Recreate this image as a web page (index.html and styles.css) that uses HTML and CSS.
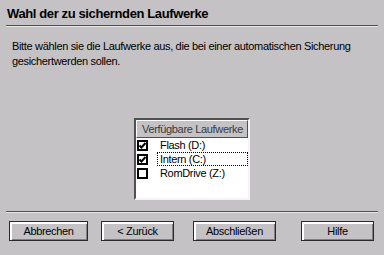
FILE: index.html
```html
<!DOCTYPE html>
<html>
<head>
<meta charset="utf-8">
<link rel="stylesheet" href="styles.css">
</head>
<body>
<div class="dialog">
  <h1 class="title">Wahl der zu sichernden Laufwerke</h1>
  <div class="sep"></div>
  <p class="intro">Bitte wählen sie die Laufwerke aus, die bei einer automatischen Sicherung<br>gesichertwerden sollen.</p>
  <div class="listwrap">
    <div class="listbox">
      <div class="listhead">Verfügbare Laufwerke</div>
      <div class="row">
        <span class="check"><svg width="7" height="7" viewBox="0 0 7 7"><path d="M0.5 3.5 L2.5 5.5 L6.5 1" fill="none" stroke="#000" stroke-width="2"/></svg></span>
        <span class="label">Flash (D:)</span>
      </div>
      <div class="row">
        <span class="check"><svg width="7" height="7" viewBox="0 0 7 7"><path d="M0.5 3.5 L2.5 5.5 L6.5 1" fill="none" stroke="#000" stroke-width="2"/></svg></span>
        <span class="label focus">Intern (C:)</span>
      </div>
      <div class="row">
        <span class="check"></span>
        <span class="label">RomDrive (Z:)</span>
      </div>
    </div>
  </div>
  <div class="sep"></div>
  <div class="buttons">
    <button class="btn btn-cancel">Abbrechen</button>
    <button class="btn btn-back">&lt; Zurück</button>
    <button class="btn btn-finish">Abschließen</button>
    <button class="btn btn-help">Hilfe</button>
  </div>
</div>
</body>
</html>
```
FILE: styles.css
```css
html, body {
  margin: 0;
  padding: 0;
  background: #c4c2c4;
}
.dialog {
  width: 384px;
  height: 255px;
  box-sizing: border-box;
  padding: 6px 6px 0 6px;
  font-family: "Liberation Sans", Arial, sans-serif;
  font-size: 11px;
  letter-spacing: -0.33px;
  color: #000;
  display: flex;
  flex-direction: column;
}
.title {
  margin: 0 0 3px 1px;
  font-size: 13px;
  font-weight: bold;
  letter-spacing: -0.38px;
  line-height: 16px;
  height: 16px;
  white-space: nowrap;
}
.sep {
  height: 1px;
  background: #505050;
  border-bottom: 1px solid #e8e8e8;
}
.intro {
  margin: 12px 0 0 6px;
  line-height: 15px;
  white-space: nowrap;
}
.listwrap {
  margin-top: 49px;
  display: flex;
  justify-content: center;
  margin-bottom: 11px;
}
.listbox {
  width: 116px;
  height: 82px;
  box-sizing: border-box;
  border: 2px solid;
  border-color: #505050 #f4f4f4 #f4f4f4 #505050;
  background: #fff;
}
.listhead {
  height: 18px;
  box-sizing: border-box;
  background: #c4c2c4;
  border: 1px solid;
  border-color: #fff #505050 #505050 #fff;
  color: #3a3a3a;
  line-height: 16px;
  padding-left: 5px;
  white-space: nowrap;
}
.row {
  height: 14px;
  display: flex;
  align-items: center;
}
.check {
  width: 11px;
  height: 11px;
  box-sizing: border-box;
  border: 2px solid #000;
  margin-left: 1px;
  display: flex;
  align-items: center;
  justify-content: center;
  background: #fff;
}
.check svg {
  display: block;
}
.label {
  margin-left: 9px;
  padding-left: 2px;
  height: 14px;
  line-height: 12px;
  flex: 1;
  box-sizing: border-box;
  border: 1px solid transparent;
  white-space: nowrap;
}
.focus {
  border: 1px dotted #000;
}
.buttons {
  display: flex;
  margin-top: 8px;
  padding-left: 3px;
}
.btn {
  height: 20px;
  box-sizing: border-box;
  border: 1px solid #2a2a2a;
  background: #c4c2c4;
  box-shadow: inset 2px 2px 0 #fff, inset -1px -1px 0 #808080;
  font-family: "Liberation Sans", Arial, sans-serif;
  font-size: 11px;
  letter-spacing: -0.33px;
  color: #000;
  padding: 0;
  line-height: 16px;
}
.btn-cancel { width: 79px; }
.btn-back { width: 73px; margin-left: 13px; }
.btn-finish { width: 83px; margin-left: 19px; }
.btn-help { width: 73px; margin-left: 25px; }
```
